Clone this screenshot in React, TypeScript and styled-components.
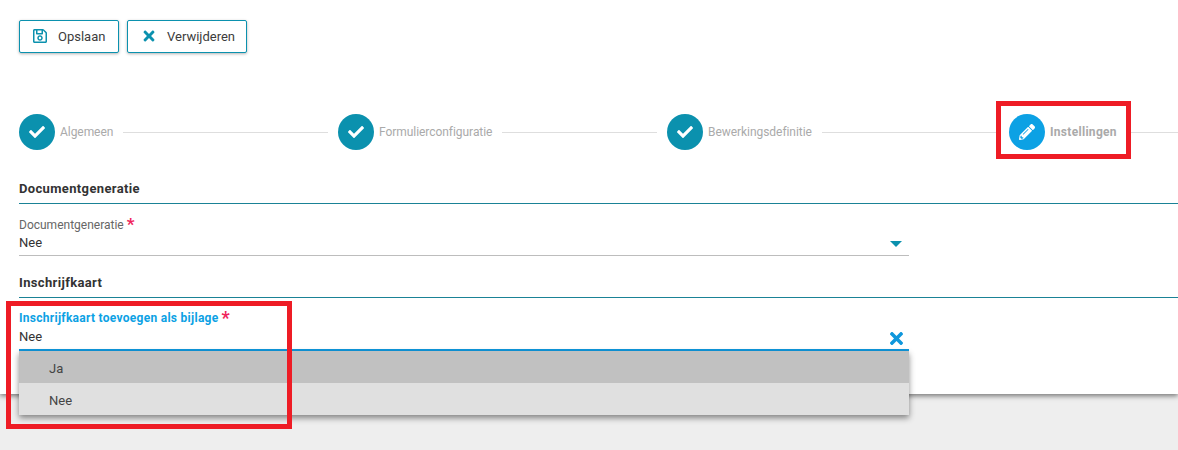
import React from "react";
import styled, { createGlobalStyle } from "styled-components";
import { FaRegSave, FaTimes, FaCheck, FaPencilAlt } from "react-icons/fa";

const Global = createGlobalStyle`
  html, body { margin: 0; padding: 0; background: #eeeeee; }
  body { font-family: Roboto, "Liberation Sans", sans-serif; overflow: hidden; }
`;

const Page = styled.div`
  position: relative;
  width: 1178px;
  height: 450px;
  overflow: hidden;
`;

const Panel = styled.main`
  height: 394px;
  box-sizing: border-box;
  background: #fff;
  padding: 20px 0 0 19px;
  box-shadow: 0 2px 5px rgba(0, 0, 0, 0.5);
`;

const Toolbar = styled.div`
  display: flex;
  gap: 8px;
`;

const ActionButton = styled.button<{ $width: number; $gap: number; $pad: number }>`
  display: flex;
  align-items: center;
  gap: ${(p) => p.$gap}px;
  width: ${(p) => p.$width}px;
  height: 33px;
  box-sizing: border-box;
  padding: 0 0 1px ${(p) => p.$pad}px;
  background: #fff;
  border: 1px solid #0b91ae;
  border-radius: 2px;
  box-shadow: 0 1px 3px rgba(0, 0, 0, 0.3);
  color: #3c3c3c;
  font: 400 13px Roboto, sans-serif;
  svg { color: #0b91ae; flex: none; }
`;

const Stepper = styled.div`
  display: grid;
  grid-template-columns: 309px 319px 332px 1fr;
  column-gap: 10px;
  margin-top: 61px;
  height: 36px;
`;

const Step = styled.div`
  display: flex;
  align-items: center;
`;

const StepCircle = styled.span<{ $active?: boolean }>`
  display: flex;
  align-items: center;
  justify-content: center;
  width: 36px;
  height: 36px;
  flex: none;
  border-radius: 50%;
  background: ${(p) => (p.$active ? "#0ca1e4" : "#0b91ae")};
  color: #fff;
  font-size: 16px;
`;

const StepLabel = styled.span<{ $active?: boolean }>`
  margin-left: 5px;
  color: #aaa;
  font-size: 12px;
  font-weight: ${(p) => (p.$active ? 700 : 400)};
  letter-spacing: ${(p) => (p.$active ? "0.3px" : "-0.05px")};
  white-space: nowrap;
`;

const StepLine = styled.span`
  flex: 1;
  height: 1px;
  margin-left: 10px;
  background: #dedede;
`;

const SectionTitle = styled.h2<{ $top: number }>`
  margin: ${(p) => p.$top}px 0 0;
  padding-bottom: 7px;
  height: 15px;
  line-height: 15px;
  border-bottom: 1px solid #1a8296;
  color: #333;
  font-size: 13px;
  font-weight: 700;
  letter-spacing: 0.35px;
`;

const Field = styled.div<{ $top: number; $active?: boolean }>`
  position: relative;
  width: 890px;
  box-sizing: border-box;
  margin-top: ${(p) => p.$top}px;
  border-bottom: ${(p) => (p.$active ? "2px solid #0f97dc" : "1px solid #bdbdbd")};
`;

const FieldLabel = styled.label<{ $active?: boolean }>`
  display: block;
  height: 15px;
  line-height: 15px;
  color: ${(p) => (p.$active ? "#0ca1e4" : "#666")};
  font-size: 12px;
  font-weight: ${(p) => (p.$active ? 700 : 400)};
  letter-spacing: ${(p) => (p.$active ? "0.28px" : "0")};
`;

const Required = styled.span<{ $active?: boolean }>`
  margin-left: 3px;
  color: #f0245c;
  font-size: ${(p) => (p.$active ? 18 : 17)}px;
  font-weight: 700;
  line-height: 12px;
  vertical-align: ${(p) => (p.$active ? "-2px" : "-1px")};
`;

const FieldValue = styled.div<{ $active?: boolean }>`
  height: 20px;
  margin-top: ${(p) => (p.$active ? 3 : 2)}px;
  line-height: 16px;
  color: #333;
  font-size: 13px;
`;

const Caret = styled.span`
  position: absolute;
  right: 7px;
  bottom: 8px;
  width: 0;
  height: 0;
  border-left: 6px solid transparent;
  border-right: 6px solid transparent;
  border-top: 6px solid #0b91ae;
`;

const Clear = styled.span`
  position: absolute;
  right: 3px;
  bottom: 1px;
  display: flex;
  color: #0f97dc;
  font-size: 19px;
`;

const Menu = styled.ul`
  position: absolute;
  left: 0;
  right: 0;
  top: 100%;
  margin: 2px 0 0;
  padding: 0;
  list-style: none;
  box-shadow: 0 3px 6px rgba(0, 0, 0, 0.45);
  z-index: 2;
`;

const MenuItem = styled.li<{ $hover?: boolean }>`
  height: 32px;
  box-sizing: border-box;
  padding-left: 30px;
  line-height: 36px;
  background: ${(p) => (p.$hover ? "#c1c1c1" : "#e0e0e0")};
  color: #444;
  font-size: 13px;
`;

const Highlight = styled.div<{ $x: number; $y: number; $w: number; $h: number }>`
  position: absolute;
  left: ${(p) => p.$x}px;
  top: ${(p) => p.$y}px;
  width: ${(p) => p.$w}px;
  height: ${(p) => p.$h}px;
  box-sizing: border-box;
  border: 5px solid #ee1c25;
  z-index: 3;
  pointer-events: none;
`;

const steps = ["Algemeen", "Formulierconfiguratie", "Bewerkingsdefinitie"];

export default function App() {
  return (
    <Page>
      <Global />
      <Panel>
        <Toolbar>
          <ActionButton $width={100} $gap={10} $pad={12}>
            <FaRegSave size={16} />
            Opslaan
          </ActionButton>
          <ActionButton $width={120} $gap={10} $pad={13}>
            <FaTimes size={16} />
            Verwijderen
          </ActionButton>
        </Toolbar>
        <Stepper>
          {steps.map((s) => (
            <Step key={s}>
              <StepCircle>
                <FaCheck />
              </StepCircle>
              <StepLabel>{s}</StepLabel>
              <StepLine />
            </Step>
          ))}
          <Step>
            <StepCircle $active>
              <FaPencilAlt />
            </StepCircle>
            <StepLabel $active>Instellingen</StepLabel>
            <StepLine />
          </Step>
        </Stepper>
        <SectionTitle $top={31}>Documentgeneratie</SectionTitle>
        <Field $top={14}>
          <FieldLabel>
            Documentgeneratie<Required>*</Required>
          </FieldLabel>
          <FieldValue>Nee</FieldValue>
          <Caret />
        </Field>
        <SectionTitle $top={19}>Inschrijfkaart</SectionTitle>
        <Field $top={13} $active>
          <FieldLabel $active>
            Inschrijfkaart toevoegen als bijlage<Required $active>*</Required>
          </FieldLabel>
          <FieldValue $active>Nee</FieldValue>
          <Clear>
            <FaTimes />
          </Clear>
          <Menu>
            <MenuItem $hover>Ja</MenuItem>
            <MenuItem>Nee</MenuItem>
          </Menu>
        </Field>
      </Panel>
      <Highlight $x={996} $y={101} $w={135} $h={58} />
      <Highlight $x={6} $y={301} $w={286} $h={128} />
    </Page>
  );
}
